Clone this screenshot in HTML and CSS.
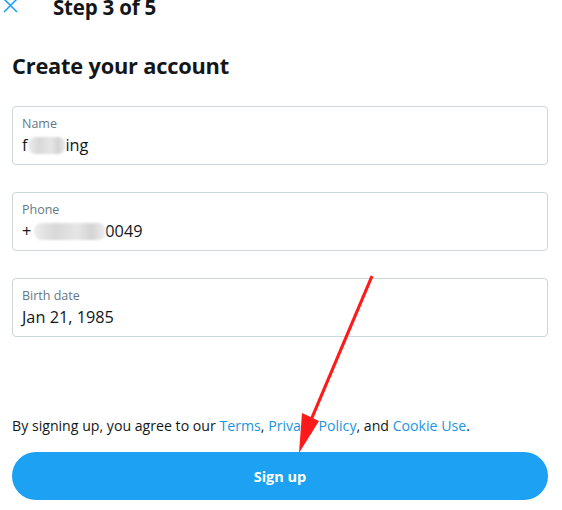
FILE: index.html
```html
<!DOCTYPE html>
<html>
<head>
<meta charset="utf-8">
<link rel="stylesheet" href="styles.css">
</head>
<body>
<div class="page">
  <header class="topbar">
    <svg class="close" width="16" height="14" viewBox="0 0 16 14"><path d="M2 -1 L15 12 M15 -1 L2 12" stroke="#1da1f2" stroke-width="1.6" fill="none"/></svg>
    <div class="step">Step 3 of 5</div>
  </header>
  <main class="content">
    <h1 class="title">Create your account</h1>
    <div class="fields">
      <div class="field">
        <div class="label">Name</div>
        <div class="value">f<span class="blur b1"></span>ing</div>
      </div>
      <div class="field">
        <div class="label">Phone</div>
        <div class="value">+<span class="blur b2"></span>0049</div>
      </div>
      <div class="field">
        <div class="label">Birth date</div>
        <div class="value">Jan 21, 1985</div>
      </div>
    </div>
    <p class="terms">By signing up, you agree to our <a>Terms</a>, <a>Privacy Policy</a>, and <a>Cookie Use</a>.</p>
    <button class="signup">Sign up</button>
  </main>
  <svg class="arrow" width="562" height="510" viewBox="0 0 562 510">
    <path d="M372 276 L311 420" stroke="#ff1a1a" stroke-width="3.2" fill="none"/>
    <path d="M299 453 L302 413 L319 421 Z" fill="#ff1a1a"/>
  </svg>
</div>
</body>
</html>
```
FILE: styles.css
```css
html, body {
  margin: 0;
  padding: 0;
  background: #fff;
}
body {
  font-family: "Open Sans", "Noto Sans", sans-serif;
  color: #14171a;
}
.page {
  position: relative;
  width: 562px;
  height: 510px;
  overflow: hidden;
}
.topbar {
  display: flex;
  align-items: flex-start;
  height: 20px;
}
.close {
  margin-left: 2px;
  margin-top: 0;
  display: block;
}
.step {
  margin-left: 35px;
  font-size: 20.5px;
  line-height: 15px;
  font-weight: 700;
  letter-spacing: -0.2px;
}
.content {
  padding: 0 14px 0 12px;
}
.title {
  margin: 30px 0 0 0;
  font-size: 21.8px;
  font-weight: 700;
  line-height: 32px;
  letter-spacing: -0.2px;
}
.fields {
  display: flex;
  flex-direction: column;
  gap: 27px;
  margin-top: 24px;
}
.field {
  height: 59px;
  box-sizing: border-box;
  border: 1px solid #ccd6dd;
  border-radius: 4px;
  padding: 8px 9px 0 9px;
}
.label {
  font-size: 12.5px;
  line-height: 17px;
  color: #657786;
}
.value {
  font-size: 16.3px;
  line-height: 24px;
  margin-top: 1px;
  color: #14171a;
  display: flex;
  align-items: center;
}
.blur {
  display: inline-block;
  height: 17px;
  background: linear-gradient(90deg, #ececec, #d8d8d8 30%, #e6e6e6 60%, #d4d4d4 80%, #f0f0f0);
  border-radius: 8px;
  filter: blur(1px);
}
.b1 { width: 38px; margin: 0 -1px 0 1px; }
.b2 { width: 72px; margin: 0 -1px 0 3px; }
.terms {
  margin: 79px 0 0 0;
  font-size: 14.15px;
  line-height: 20px;
  color: #14171a;
}
.terms a {
  color: #1b95e0;
}
.signup {
  display: block;
  width: 536px;
  height: 48px;
  margin-top: 16px;
  border: none;
  border-radius: 24px;
  background: #1da1f2;
  color: #fff;
  font-family: "Open Sans", "Noto Sans", sans-serif;
  font-size: 14.5px;
  font-weight: 700;
}
.arrow {
  position: absolute;
  left: 0;
  top: 0;
  pointer-events: none;
}
```
